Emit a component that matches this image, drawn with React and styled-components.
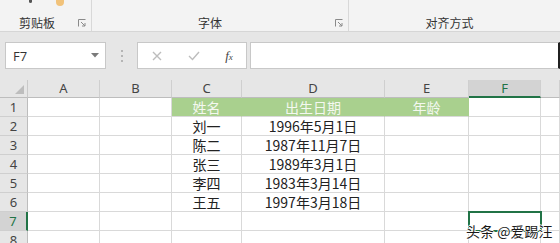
import React from 'react';
import styled, { createGlobalStyle } from 'styled-components';

const Global = createGlobalStyle`
  html, body {
    margin: 0;
    padding: 0;
    width: 560px;
    height: 243px;
    overflow: hidden;
    background: #ffffff;
  }
  body {
    font-family: "Noto Sans CJK SC", "Noto Sans", "Liberation Sans", sans-serif;
    color: #262626;
  }
`;

const Page = styled.div`
  position: relative;
  width: 560px;
  height: 243px;
  overflow: hidden;
  display: flex;
  flex-direction: column;
`;

const Ribbon = styled.div`
  height: 31px;
  background: #f3f3f3;
  border-bottom: 1px solid #d6d6d6;
  display: grid;
  grid-template-columns: 92px 257px 1fr;
  flex-shrink: 0;
`;

const Group = styled.div`
  position: relative;
  border-right: ${p => (p.$last ? 'none' : '1px solid #d8d8d8')};
  display: flex;
  align-items: flex-end;
  justify-content: center;
  padding-bottom: 0;
  padding-right: ${p => p.$shift || 0}px;
`;

const GroupLabel = styled.span`
  font-size: 12px;
  line-height: 16px;
  color: #333;
`;

const Launcher = styled.svg`
  position: absolute;
  right: 5px;
  bottom: 4px;
`;

const TopMark = styled.span`
  position: absolute;
  top: 0;
  left: ${p => p.$x}px;
  width: ${p => p.$w}px;
  height: ${p => p.$h}px;
  background: ${p => p.$c};
  border-radius: 0 0 ${p => p.$w}px ${p => p.$w}px;
`;

const FormulaArea = styled.div`
  height: 48px;
  background: #e6e6e6;
  display: flex;
  align-items: flex-start;
  padding-top: 10px;
  box-sizing: border-box;
  flex-shrink: 0;
`;

const NameBox = styled.div`
  margin-left: 5px;
  width: 101px;
  height: 27px;
  box-sizing: border-box;
  background: #fff;
  border: 1px solid #c8c8c8;
  display: flex;
  align-items: center;
  justify-content: space-between;
  padding: 0 6px 0 7px;
  font-size: 13px;
  font-family: "Open Sans", "Noto Sans", sans-serif;
  color: #333;
`;

const Dots = styled.div`
  width: 31px;
  height: 27px;
  display: flex;
  flex-direction: column;
  align-items: center;
  justify-content: center;
  gap: 3px;
  & > i {
    width: 2px;
    height: 2px;
    background: #b5b5b5;
  }
`;

const Buttons = styled.div`
  width: 110px;
  height: 27px;
  box-sizing: border-box;
  background: #fff;
  border: 1px solid #c8c8c8;
  display: grid;
  grid-template-columns: 37px 37px 1fr;
  align-items: center;
  justify-items: center;
`;

const Fx = styled.span`
  font-family: "Liberation Serif", serif;
  font-style: italic;
  font-size: 13px;
  color: #444;
  & sub {
    font-size: 9px;
    vertical-align: baseline;
  }
`;

const FormulaInput = styled.div`
  margin-left: 3px;
  flex: 1;
  height: 27px;
  box-sizing: border-box;
  background: #fff;
  border: 1px solid #c8c8c8;
  border-right: 2px solid #202020;
`;

const Sheet = styled.div`
  flex: 1;
  display: grid;
  grid-template-columns: 28px 72px 72px 70px 143px 84px 72px 1fr;
  grid-template-rows: 18px repeat(7, 19px) 1fr;
  background: #fff;
`;

const Corner = styled.div`
  background: #e6e6e6;
  border-right: 1px solid #c9c9c9;
  border-bottom: 1px solid #bdbdbd;
  position: relative;
  &::after {
    content: '';
    position: absolute;
    right: 3px;
    bottom: 3px;
    border-style: solid;
    border-width: 0 0 9px 9px;
    border-color: transparent transparent #bdbdbd transparent;
  }
`;

const ColHead = styled.div`
  background: ${p => (p.$sel ? '#d3d3d3' : '#e6e6e6')};
  border-right: 1px solid #cfcfcf;
  border-bottom: ${p => (p.$sel ? '2px solid #217346' : '1px solid #bdbdbd')};
  box-sizing: border-box;
  display: flex;
  align-items: center;
  justify-content: center;
  font-size: 13px;
  font-family: "Noto Sans", "Liberation Sans", sans-serif;
  color: ${p => (p.$sel ? '#217346' : '#444')};
  line-height: 1;
`;

const RowHead = styled.div`
  background: ${p => (p.$sel ? '#d3d3d3' : '#e6e6e6')};
  border-right: ${p => (p.$sel ? '2px solid #217346' : '1px solid #bdbdbd')};
  border-bottom: 1px solid #cfcfcf;
  box-sizing: border-box;
  display: flex;
  align-items: ${p => (p.$top ? 'flex-start' : 'center')};
  padding-top: ${p => (p.$top ? '3px' : '0')};
  justify-content: center;
  font-size: 13px;
  font-family: "Noto Sans", "Liberation Sans", sans-serif;
  color: ${p => (p.$sel ? '#217346' : '#444')};
  line-height: 1;
  overflow: hidden;
`;

const Cell = styled.div`
  background: ${p => (p.$head ? '#a9d08e' : '#fff')};
  border-right: 1px solid ${p => (p.$head ? '#a9d08e' : '#d9d9d9')};
  border-bottom: 1px solid #d9d9d9;
  box-sizing: border-box;
  display: flex;
  align-items: center;
  justify-content: center;
  font-size: 14px;
  line-height: 1;
  color: ${p => (p.$head ? '#f4f8f0' : '#222')};
  white-space: nowrap;
  ${p => (p.$active ? 'outline: 2px solid #217346; outline-offset: -1px; z-index: 1;' : '')}
`;

const Watermark = styled.div`
  position: absolute;
  left: 466px;
  top: 222px;
  font-size: 14px;
  line-height: 18px;
  color: #1a1a1a;
  text-shadow: 1px 0 #fff, -1px 0 #fff, 0 1px #fff, 0 -1px #fff;
  z-index: 3;
  white-space: nowrap;
`;

const cols = ['A', 'B', 'C', 'D', 'E', 'F', ''];

const rows = [
  ['', '', '姓名', '出生日期', '年龄', '', ''],
  ['', '', '刘一', '1996年5月1日', '', '', ''],
  ['', '', '陈二', '1987年11月7日', '', '', ''],
  ['', '', '张三', '1989年3月1日', '', '', ''],
  ['', '', '李四', '1983年3月14日', '', '', ''],
  ['', '', '王五', '1997年3月18日', '', '', ''],
  ['', '', '', '', '', '', ''],
  ['', '', '', '', '', '', ''],
];

function LauncherIcon() {
  return (
    <Launcher width="8" height="8" viewBox="0 0 8 8">
      <path d="M0.5 7.5V0.5H7.5" fill="none" stroke="#8a8a8a" strokeWidth="1" />
      <path d="M3 3L7 7M7 4V7H4" fill="none" stroke="#8a8a8a" strokeWidth="1" />
    </Launcher>
  );
}

export default function App() {
  return (
    <Page>
      <Global />
      <Ribbon>
        <Group $shift={17}>
          <TopMark $x={29} $w={3} $h={3} $c="#555" />
          <TopMark $x={56} $w={8} $h={6} $c="#f1c27a" />
          <GroupLabel>剪贴板</GroupLabel>
          <LauncherIcon />
        </Group>
        <Group $shift={20}>
          <GroupLabel>字体</GroupLabel>
          <LauncherIcon />
        </Group>
        <Group $last $shift={10}>
          <GroupLabel>对齐方式</GroupLabel>
        </Group>
      </Ribbon>
      <FormulaArea>
        <NameBox>
          <span>F7</span>
          <svg width="8" height="5" viewBox="0 0 8 5">
            <path d="M0 0H8L4 4.5Z" fill="#7a7a7a" />
          </svg>
        </NameBox>
        <Dots>
          <i />
          <i />
          <i />
        </Dots>
        <Buttons>
          <svg width="10" height="10" viewBox="0 0 10 10">
            <path d="M1 1L9 9M9 1L1 9" stroke="#bdbdbd" strokeWidth="1.4" />
          </svg>
          <svg width="12" height="10" viewBox="0 0 12 10">
            <path d="M1 5L4.5 8.5L11 1" fill="none" stroke="#bdbdbd" strokeWidth="1.4" />
          </svg>
          <Fx>
            f<sub>x</sub>
          </Fx>
        </Buttons>
        <FormulaInput />
      </FormulaArea>
      <Sheet>
        <Corner />
        {cols.map((c, i) => (
          <ColHead key={'h' + i} $sel={c === 'F'}>
            {c}
          </ColHead>
        ))}
        {rows.map((r, ri) => (
          <React.Fragment key={'r' + ri}>
            <RowHead $sel={ri === 6} $top={ri === 7}>
              {ri + 1}
            </RowHead>
            {r.map((v, ci) => (
              <Cell
                key={ci}
                $head={ri === 0 && ci >= 2 && ci <= 4}
                $active={ri === 6 && ci === 5}
              >
                {v}
              </Cell>
            ))}
          </React.Fragment>
        ))}
      </Sheet>
      <Watermark>头条 @爱踢汪</Watermark>
    </Page>
  );
}
